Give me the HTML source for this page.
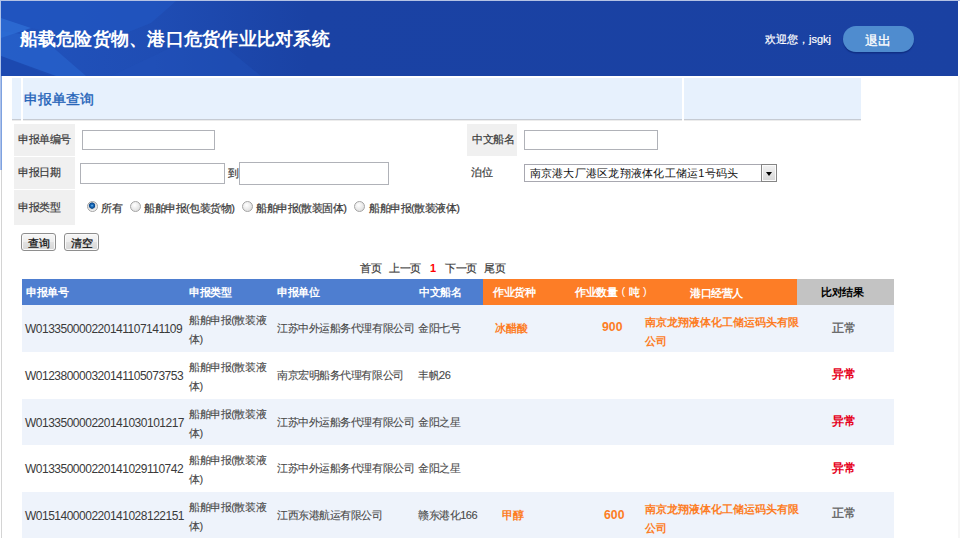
<!DOCTYPE html>
<html><head><meta charset="utf-8">
<style>
html,body{margin:0;padding:0;}
body{width:960px;height:538px;overflow:hidden;position:relative;background:#fff;font-family:"Liberation Sans",sans-serif;color:#333;}
.a{position:absolute;white-space:nowrap;line-height:1;}
.bx{position:absolute;}
.lbl{font-size:11px;letter-spacing:-0.5px;color:#3a3a3a;-webkit-text-stroke:0.2px #3a3a3a;}
.inp{position:absolute;box-sizing:border-box;border:1px solid #b0b2b8;background:#fff;}
.btn{position:absolute;box-sizing:border-box;border:1px solid #8e8e8e;border-radius:3px;box-shadow:inset 0 0 0 1px #fafafa;background:linear-gradient(#f7f7f7,#ededed 50%,#e2e2e2 50%,#d6d6d6);font-size:11px;color:#111;-webkit-text-stroke:0.25px #111;text-align:center;}
.radio{position:absolute;width:11px;height:11px;box-sizing:border-box;border-radius:50%;border:1px solid #a4a4a4;background:radial-gradient(circle at 40% 35%,#ffffff,#e6e6e6 60%,#d4d4d4);}
.th{position:absolute;font-size:11px;letter-spacing:-0.45px;font-weight:bold;color:#fff;white-space:nowrap;line-height:1;}
.td{position:absolute;font-size:11px;letter-spacing:-0.45px;color:#484848;-webkit-text-stroke:0.1px #484848;white-space:nowrap;line-height:1;}
.num{font-size:12px;letter-spacing:-0.5px;-webkit-text-stroke:0 transparent;color:#3a3a3a;}
.qty{font-size:12.3px !important;}
.res{font-size:12px !important;letter-spacing:-0.2px;font-weight:normal;color:#606060;-webkit-text-stroke:0.35px #606060;}
.red.res{color:#e6001c;font-weight:bold;-webkit-text-stroke:0 transparent;}
.or{color:#fd7d25;-webkit-text-stroke:0 transparent;font-weight:bold;font-size:11px;letter-spacing:0;}
.red{color:#e0001b;font-weight:bold;}
</style></head>
<body>
<!-- outer borders -->
<div class="bx" style="left:0;top:0;width:960px;height:1px;background:#b4c2e4"></div>
<div class="bx" style="left:0;top:0;width:1px;height:170px;background:#aec2ea"></div>
<div class="bx" style="left:1px;top:76px;width:1px;height:94px;background:#7ea2e0"></div>
<div class="bx" style="left:1px;top:170px;width:1px;height:368px;background:#d4d4d4"></div>
<div class="bx" style="left:958px;top:76px;width:2px;height:462px;background:#f6f6f6"></div>

<!-- header -->
<div class="bx" style="left:1px;top:1px;width:957px;height:75px;background:#1a41a2;overflow:hidden">
  <svg width="957" height="75" style="position:absolute;left:0;top:0">
    <defs>
      <linearGradient id="g1" x1="0" x2="1" y1="0" y2="0">
        <stop offset="0" stop-color="#2153bd"/>
        <stop offset="0.16" stop-color="#1f4db4"/>
        <stop offset="0.32" stop-color="#1a42a4"/>
        <stop offset="1" stop-color="#1a41a2"/>
      </linearGradient>
    </defs>
    <rect x="0" y="0" width="957" height="75" fill="url(#g1)"/>
    <polygon points="0,0 175,0 150,22 100,42 30,27 0,17" fill="#2155c0" opacity="0.7"/>
    <polygon points="0,30 40,36 85,75 50,75 0,55" fill="#2762cb" opacity="0.75"/>
    <polygon points="0,17 30,27 0,37" fill="#2d6cd3" opacity="0.85"/>
    <polygon points="0,55 55,75 0,75" fill="#1c47ac" opacity="0.8"/>
    <polygon points="110,75 205,30 260,75" fill="#2152ba" opacity="0.45"/>
  </svg>
  <div class="a" style="left:18.5px;top:29px;font-size:18px;letter-spacing:0.25px;font-weight:bold;color:#fff">船载危险货物、港口危货作业比对系统</div>
  <div class="a" style="left:764px;top:33px;font-size:11px;color:#fff;-webkit-text-stroke:0.2px #fff">欢迎您，jsgkj</div>
  <div class="bx" style="left:842px;top:25px;width:71px;height:26px;border-radius:13px;background:#4f8ccf;box-shadow:0 1.5px 1px #0f2f85"></div>
  <div class="a" style="left:864px;top:33.5px;font-size:12.5px;color:#fff;-webkit-text-stroke:0.3px #fff">退出</div>
</div>

<!-- panel title -->
<div class="bx" style="left:12px;top:78px;width:849px;height:41px;background:#e7f1fd"></div>
<div class="bx" style="left:12px;top:119px;width:849px;height:1px;background:#c6cbd3"></div>
<div class="bx" style="left:12px;top:120px;width:849px;height:1px;background:#ececec"></div>
<div class="bx" style="left:21px;top:78px;width:2px;height:43px;background:#fff"></div>
<div class="bx" style="left:682px;top:78px;width:2px;height:43px;background:#fff"></div>
<div class="a" style="left:24px;top:92px;font-size:14px;color:#2262b8;-webkit-text-stroke:0.35px #2262b8">申报单查询</div>

<!-- form -->
<div class="bx" style="left:14px;top:124px;width:61px;height:32px;background:#f0f0f0"></div>
<div class="bx" style="left:14px;top:157px;width:61px;height:32px;background:#f0f0f0"></div>
<div class="bx" style="left:14px;top:190px;width:61px;height:35px;background:#f0f0f0"></div>
<div class="bx" style="left:467px;top:124px;width:50px;height:32px;background:#f0f0f0"></div>

<div class="a lbl" style="left:18px;top:134px">申报单编号</div>
<div class="a lbl" style="left:18px;top:167px">申报日期</div>
<div class="a lbl" style="left:18px;top:202px">申报类型</div>
<div class="a lbl" style="left:472px;top:134px">中文船名</div>
<div class="a lbl" style="left:471px;top:167px">泊位</div>

<div class="inp" style="left:82px;top:130px;width:133px;height:20px"></div>
<div class="inp" style="left:80px;top:163px;width:145px;height:21px"></div>
<div class="a lbl" style="left:228px;top:168px">到</div>
<div class="inp" style="left:239px;top:162px;width:150px;height:23px"></div>
<div class="inp" style="left:524px;top:130px;width:134px;height:20px"></div>
<div class="inp" style="left:524px;top:164px;width:253px;height:18px;border-color:#a8a8b0"></div>
<div class="a" style="left:529.5px;top:167.5px;font-size:11px;letter-spacing:0.25px;color:#111">南京港大厂港区龙翔液体化工储运1号码头</div>
<div class="bx" style="left:761px;top:164px;width:16px;height:18px;box-sizing:border-box;border:1px solid #858585;box-shadow:inset 0 0 0 1px #fbfbfb;background:linear-gradient(#f2f2f2,#d6d6d6)"></div>
<div class="bx" style="left:765.5px;top:172px;width:0;height:0;border-left:3.5px solid transparent;border-right:3.5px solid transparent;border-top:4px solid #000"></div>

<div class="radio" style="left:87px;top:200.5px;background:radial-gradient(circle at 45% 40%,#7cc4f4 0,#1c6fc0 1.2px,#0b4a8e 2.6px,#3a6a9a 3px,#d8d8d8 3.4px,#f2f2f2 5px)"></div>
<div class="a lbl" style="left:101px;top:202.5px">所有</div>
<div class="radio" style="left:129.5px;top:200.5px"></div>
<div class="a lbl" style="left:144px;top:202.5px">船舶申报(包装货物)</div>
<div class="radio" style="left:241.5px;top:200.5px"></div>
<div class="a lbl" style="left:256px;top:202.5px">船舶申报(散装固体)</div>
<div class="radio" style="left:354px;top:200.5px"></div>
<div class="a lbl" style="left:369px;top:202.5px">船舶申报(散装液体)</div>

<div class="btn" style="left:21px;top:233px;width:35px;height:18px;line-height:18px">查询</div>
<div class="btn" style="left:64px;top:233px;width:35px;height:18px;line-height:18px">清空</div>

<!-- pagination -->
<div class="a lbl" style="left:360px;top:263px">首页</div>
<div class="a lbl" style="left:389px;top:263px">上一页</div>
<div class="a" style="left:430px;top:263px;font-size:11px;font-weight:bold;color:#f00">1</div>
<div class="a lbl" style="left:445px;top:263px">下一页</div>
<div class="a lbl" style="left:484px;top:263px">尾页</div>

<!-- table header -->
<div class="bx" style="left:22px;top:279px;width:461px;height:26px;background:#4e7ed0"></div>
<div class="bx" style="left:483px;top:279px;width:314px;height:26px;background:#fd7d26"></div>
<div class="bx" style="left:797px;top:279px;width:97px;height:26px;background:#c3c3c3"></div>
<div class="th" style="left:26px;top:286.5px">申报单号</div>
<div class="th" style="left:189px;top:286.5px">申报类型</div>
<div class="th" style="left:277px;top:286.5px">申报单位</div>
<div class="th" style="left:419px;top:286.5px">中文船名</div>
<div class="th" style="left:493px;top:286.5px">作业货种</div>
<div class="th" style="left:575px;top:286.5px">作业数量</div><div class="th" style="left:621.5px;top:285.5px;font-weight:normal">(</div><div class="th" style="left:629px;top:286.5px">吨</div><div class="th" style="left:643px;top:285.5px;font-weight:normal">)</div>
<div class="th" style="left:690px;top:287.5px">港口经营人</div>
<div class="th" style="left:821px;top:287px;color:#000">比对结果</div>

<!-- rows -->
<div class="bx" style="left:22px;top:305px;width:872px;height:47px;background:#eef3fb"></div>
<div class="bx" style="left:22px;top:399px;width:872px;height:46px;background:#eef3fb"></div>
<div class="bx" style="left:22px;top:492px;width:872px;height:46px;background:#eef3fb"></div>

<!-- row 1 -->
<div class="td num" style="left:25px;top:323px">W013350000220141107141109</div>
<div class="td" style="left:189px;top:315px">船舶申报(散装液</div>
<div class="td" style="left:189px;top:334px">体)</div>
<div class="td" style="left:277px;top:323px">江苏中外运船务代理有限公司</div>
<div class="td" style="left:418px;top:323px">金阳七号</div>
<div class="td or" style="left:495px;top:323px">冰醋酸</div>
<div class="td or qty" style="left:602px;top:321px">900</div>
<div class="td or" style="left:645px;top:317px">南京龙翔液体化工储运码头有限</div>
<div class="td or" style="left:645px;top:336px">公司</div>
<div class="td res" style="left:832px;top:322px">正常</div>

<!-- row 2 -->
<div class="td num" style="left:25px;top:370px">W012380000320141105073753</div>
<div class="td" style="left:189px;top:362px">船舶申报(散装液</div>
<div class="td" style="left:189px;top:381px">体)</div>
<div class="td" style="left:277px;top:370px">南京宏明船务代理有限公司</div>
<div class="td" style="left:418px;top:370px">丰帆26</div>
<div class="td red res" style="left:832px;top:368px">异常</div>

<!-- row 3 -->
<div class="td num" style="left:25px;top:416.5px">W013350000220141030101217</div>
<div class="td" style="left:189px;top:408.5px">船舶申报(散装液</div>
<div class="td" style="left:189px;top:427.5px">体)</div>
<div class="td" style="left:277px;top:416.5px">江苏中外运船务代理有限公司</div>
<div class="td" style="left:418px;top:416.5px">金阳之星</div>
<div class="td red res" style="left:832px;top:415px">异常</div>

<!-- row 4 -->
<div class="td num" style="left:25px;top:463px">W013350000220141029110742</div>
<div class="td" style="left:189px;top:455px">船舶申报(散装液</div>
<div class="td" style="left:189px;top:474px">体)</div>
<div class="td" style="left:277px;top:463px">江苏中外运船务代理有限公司</div>
<div class="td" style="left:418px;top:463px">金阳之星</div>
<div class="td red res" style="left:832px;top:461.5px">异常</div>

<!-- row 5 -->
<div class="td num" style="left:25px;top:509.5px">W015140000220141028122151</div>
<div class="td" style="left:189px;top:501.5px">船舶申报(散装液</div>
<div class="td" style="left:189px;top:520.5px">体)</div>
<div class="td" style="left:277px;top:509.5px">江西东港航运有限公司</div>
<div class="td" style="left:418px;top:509.5px">赣东港化166</div>
<div class="td or" style="left:502px;top:509.5px">甲醇</div>
<div class="td or qty" style="left:604px;top:508.5px">600</div>
<div class="td or" style="left:645px;top:503.5px">南京龙翔液体化工储运码头有限</div>
<div class="td or" style="left:645px;top:522.5px">公司</div>
<div class="td res" style="left:832px;top:507px">正常</div>
</body></html>
